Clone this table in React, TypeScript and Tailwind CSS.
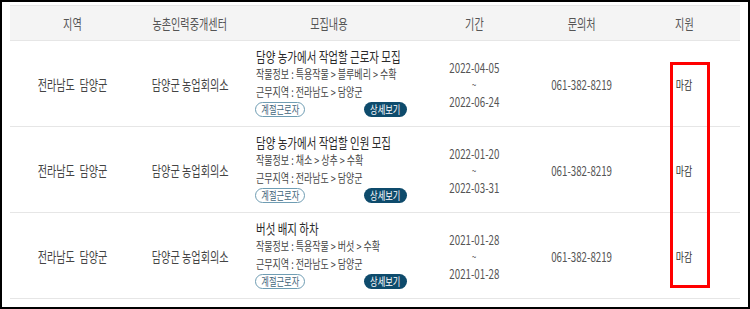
import React from "react";

const S = ({ children, left = false, className = "" }: { children: React.ReactNode; left?: boolean; className?: string }) => (
  <span className={`inline-block whitespace-nowrap scale-x-75 ${left ? "origin-left" : "origin-center"} ${className}`}>{children}</span>
);

type Row = {
  title: string;
  crop: string;
  area: string;
  from: string;
  to: string;
};

const rows: Row[] = [
  { title: "담양 농가에서 작업할 근로자 모집", crop: "작물정보 : 특용작물 > 블루베리 > 수확", area: "근무지역 : 전라남도 > 담양군", from: "2022-04-05", to: "2022-06-24" },
  { title: "담양 농가에서 작업할 인원 모집", crop: "작물정보 : 채소 > 상추 > 수확", area: "근무지역 : 전라남도 > 담양군", from: "2022-01-20", to: "2022-03-31" },
  { title: "버섯 배지 하차", crop: "작물정보 : 특용작물 > 버섯 > 수확", area: "근무지역 : 전라남도 > 담양군", from: "2021-01-28", to: "2021-01-28" },
];

const grid = "grid grid-cols-[124px_112px_166px_124px_92px_112px]";

export default function App() {
  return (
    <div className="relative w-[750px] h-[309px] border-2 border-black bg-white font-['Noto_Sans_CJK_KR','Noto_Sans',sans-serif] overflow-hidden">
      <div className="pl-[8px] pt-[3px]">
        <div className="w-[730px]">
          <div className={`${grid} h-[36px] bg-[#f4f4f4] border-t border-b border-[#e6e6e6] text-[13.5px] text-[#555]`}>
            {["지역", "농촌인력중개센터", "모집내용", "기간", "문의처", "지원"].map((h) => (
              <div key={h} className="flex items-center justify-center min-w-0">
                <S>{h}</S>
              </div>
            ))}
          </div>
          {rows.map((r, i) => (
            <div key={i} className={`${grid} h-[86px] border-b border-[#e6e6e6]`}>
              <div className="flex items-center justify-center min-w-0 text-[13.5px] text-[#444] pt-[2px]">
                <S>전라남도&nbsp; 담양군</S>
              </div>
              <div className="flex items-center justify-center min-w-0 text-[13.5px] text-[#444] pt-[2px]">
                <S>담양군 농업회의소</S>
              </div>
              <div className="min-w-0 pl-[9px] pr-[5px] pt-[6px] flex flex-col">
                <div className="text-[14px] leading-[18px] text-[#2a2a2a] pl-[1px]">
                  <S left>{r.title}</S>
                </div>
                <div className="text-[12px] leading-[18px] text-[#444] pl-[1px]">
                  <S left>{r.crop}</S>
                </div>
                <div className="text-[12px] leading-[18px] text-[#444] pl-[1px]">
                  <S left>{r.area}</S>
                </div>
                <div className="mt-[1px] flex items-center justify-between">
                  <div className="w-[50px] h-[15px] rounded-full border border-[#6f9db3] flex items-center justify-center text-[11px] leading-none text-[#3f6479]">
                    <S>계절근로자</S>
                  </div>
                  <div className="w-[43px] h-[15px] rounded-full bg-[#0e4b6c] flex items-center justify-center text-[11px] leading-none text-white">
                    <S>상세보기</S>
                  </div>
                </div>
              </div>
              <div className="flex flex-col items-center justify-center min-w-0 text-[13px] text-[#555] pt-[1px]">
                <S className="leading-[17px]">{r.from}</S>
                <S className="leading-[17px] text-[11px]">~</S>
                <S className="leading-[17px]">{r.to}</S>
              </div>
              <div className="flex items-center justify-center min-w-0 text-[13px] text-[#555] pt-[2px]">
                <S>061-382-8219</S>
              </div>
              <div className="flex items-center justify-center min-w-0 text-[12px] text-[#333] pt-[2px]">
                <S>마감</S>
              </div>
            </div>
          ))}
        </div>
      </div>
      <div className="absolute left-[668px] top-[60px] w-[40px] h-[226px] border-[3px] border-[#ff0000]" />
    </div>
  );
}
